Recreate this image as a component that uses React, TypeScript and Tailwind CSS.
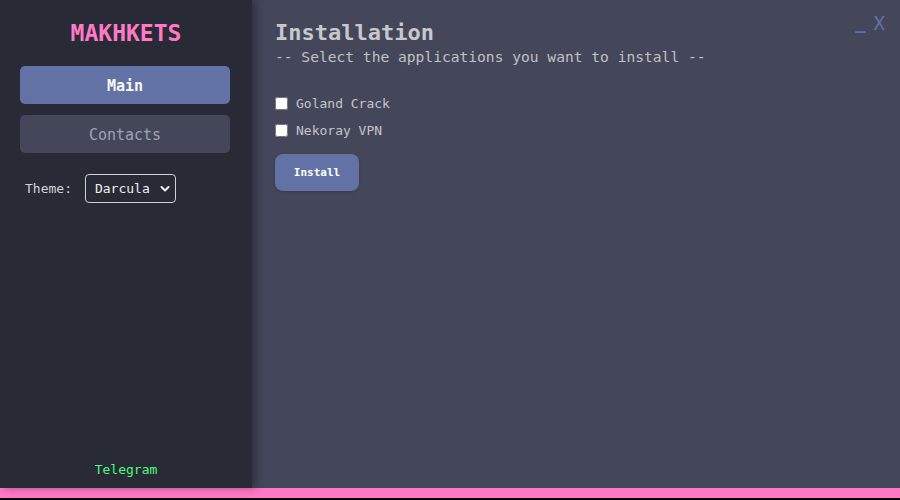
import { useState } from "react";

const mono = { fontFamily: '"DejaVu Sans Mono", "Liberation Mono", monospace' };

const apps = ["Goland Crack", "Nekoray VPN"];

function Sidebar() {
  return (
    <aside className="relative z-10 flex w-[252px] shrink-0 flex-col bg-[#282a36] shadow-[4px_0_8px_rgba(0,0,0,0.35)]">
      <h1 className="pt-[19px] text-center text-[23px] font-bold leading-[28px] text-[#ff79c6]">MAKHKETS</h1>
      <nav className="ml-5 mt-[19px] flex w-[210px] flex-col gap-[11px]">
        <button className="h-[38px] rounded-[5px] bg-[#6272a4] pt-[3px] text-[15px] font-bold text-[#f8f8f2]">Main</button>
        <button className="h-[38px] rounded-[5px] bg-[#44475a] pt-[3px] text-[15px] text-[#9ea2b4]">Contacts</button>
      </nav>
      <div className="mt-[21px] flex items-center gap-[13px] pl-[25px]">
        <span className="text-[13px] text-[#d4d4d4]">Theme:</span>
        <div className="relative flex">
          <select
            defaultValue="Darcula"
            className="h-[29px] w-[91px] appearance-none rounded-[4px] border border-[#d0d0d8] bg-transparent pl-[9px] text-[13px] text-[#f0f0f0] outline-none"
          >
            <option className="bg-[#282a36]">Darcula</option>
            <option className="bg-[#282a36]">Light</option>
          </select>
          <svg
            className="pointer-events-none absolute right-[6px] top-[11px]"
            width="10"
            height="8"
            viewBox="0 0 10 8"
            fill="none"
            stroke="#f0f0f0"
            strokeWidth="2"
            strokeLinecap="round"
            strokeLinejoin="round"
          >
            <path d="M1.5 2l3.5 3.5L8.5 2" />
          </svg>
        </div>
      </div>
      <div className="mt-auto pb-[9px] text-center text-[13px] text-[#50fa7b]">Telegram</div>
    </aside>
  );
}

export default function App() {
  const [checked, setChecked] = useState<Record<string, boolean>>({});

  return (
    <div className="flex h-[500px] w-[900px] flex-col bg-black" style={mono}>
      <div className="flex h-[488px]">
        <Sidebar />
        <main className="relative flex-1 bg-[#44475a] pl-[23px] pt-[20px]">
          <div className="absolute right-[15px] top-[11px] flex items-start gap-[8px] text-[#6272a4]">
            <span className="text-[17px] font-bold leading-[25px]">_</span>
            <span className="text-[19px] leading-[24px]">X</span>
          </div>
          <h2 className="text-[22px] font-bold leading-[26px] text-[#c8c8cc]">Installation</h2>
          <p className="mt-[1px] text-[14.6px] leading-[20px] text-[#c0c0c6]">
            -- Select the applications you want to install --
          </p>
          <div className="mt-[28px] flex flex-col gap-[10px]">
            {apps.map((name) => (
              <label key={name} className="flex items-center gap-[8px] text-[13px] leading-[17px] text-[#c4c4ca]">
                <input
                  type="checkbox"
                  className="m-0 h-[13px] w-[13px]"
                  checked={!!checked[name]}
                  onChange={(e) => setChecked({ ...checked, [name]: e.target.checked })}
                />
                {name}
              </label>
            ))}
          </div>
          <button className="mt-[15px] h-[37px] w-[84px] rounded-[8px] bg-[#6272a4] pt-[1px] text-[11px] font-bold text-white shadow-[0_1px_3px_rgba(0,0,0,0.2)]">
            Install
          </button>
        </main>
      </div>
      <div className="h-[10px] bg-[#ff79c6]" />
    </div>
  );
}
